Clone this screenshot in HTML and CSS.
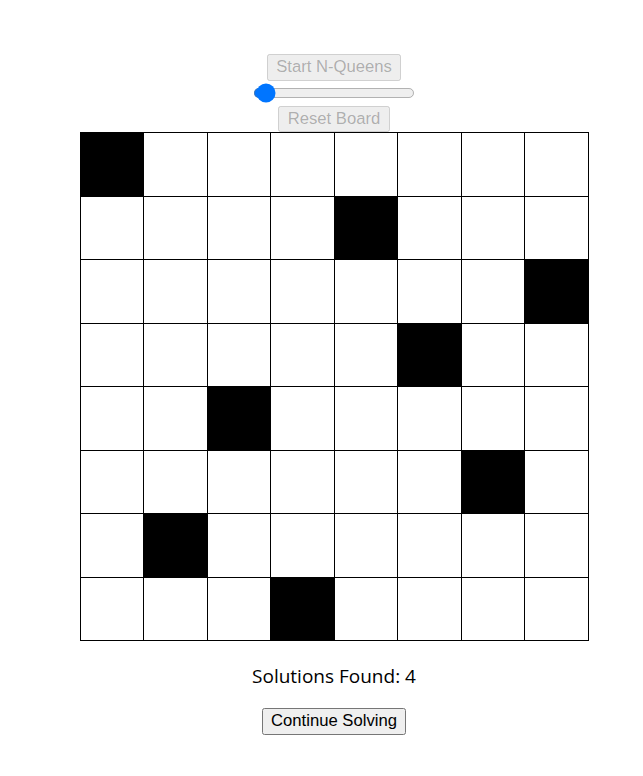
FILE: index.html
```html
<!DOCTYPE html>
<html>
<head>
<meta charset="utf-8">
<link rel="stylesheet" href="styles.css">
</head>
<body>
<div class="app">
  <button class="btn" disabled>Start N-Queens</button>
  <input class="size" type="range" min="1" max="50" value="2">
  <button class="btn" disabled>Reset Board</button>
  <div class="board">
    <div class="cell q"></div><div class="cell"></div><div class="cell"></div><div class="cell"></div><div class="cell"></div><div class="cell"></div><div class="cell"></div><div class="cell"></div>
    <div class="cell"></div><div class="cell"></div><div class="cell"></div><div class="cell"></div><div class="cell q"></div><div class="cell"></div><div class="cell"></div><div class="cell"></div>
    <div class="cell"></div><div class="cell"></div><div class="cell"></div><div class="cell"></div><div class="cell"></div><div class="cell"></div><div class="cell"></div><div class="cell q"></div>
    <div class="cell"></div><div class="cell"></div><div class="cell"></div><div class="cell"></div><div class="cell"></div><div class="cell q"></div><div class="cell"></div><div class="cell"></div>
    <div class="cell"></div><div class="cell"></div><div class="cell q"></div><div class="cell"></div><div class="cell"></div><div class="cell"></div><div class="cell"></div><div class="cell"></div>
    <div class="cell"></div><div class="cell"></div><div class="cell"></div><div class="cell"></div><div class="cell"></div><div class="cell"></div><div class="cell q"></div><div class="cell"></div>
    <div class="cell"></div><div class="cell q"></div><div class="cell"></div><div class="cell"></div><div class="cell"></div><div class="cell"></div><div class="cell"></div><div class="cell"></div>
    <div class="cell"></div><div class="cell"></div><div class="cell"></div><div class="cell q"></div><div class="cell"></div><div class="cell"></div><div class="cell"></div><div class="cell"></div>
  </div>
  <p class="status">Solutions Found: 4</p>
  <button class="btn">Continue Solving</button>
</div>
</body>
</html>
```
FILE: styles.css
```css
html, body {
  margin: 0;
  padding: 0;
  background: #ffffff;
}
.app {
  width: 668px;
  display: flex;
  flex-direction: column;
  align-items: center;
  padding-top: 54px;
  font-family: "Open Sans", "Noto Sans", sans-serif;
}
.btn {
  zoom: 1.25;
  font-family: "Liberation Sans", Arial, sans-serif;
  font-size: 13.333px;
}
.size {
  zoom: 1.25;
  accent-color: #0075ff;
  margin: 2px 0;
}
.board {
  display: grid;
  grid-template-columns: repeat(8, 63.5px);
  grid-auto-rows: 63.5px;
  border-left: 1px solid #000;
  border-top: 1px solid #000;
}
.cell {
  box-sizing: border-box;
  border-right: 1px solid #000;
  border-bottom: 1px solid #000;
  background: #fff;
}
.cell.q {
  background: #000;
}
.status {
  font-size: 19px;
  margin: 22px 0 19px;
  color: #000;
}
```
